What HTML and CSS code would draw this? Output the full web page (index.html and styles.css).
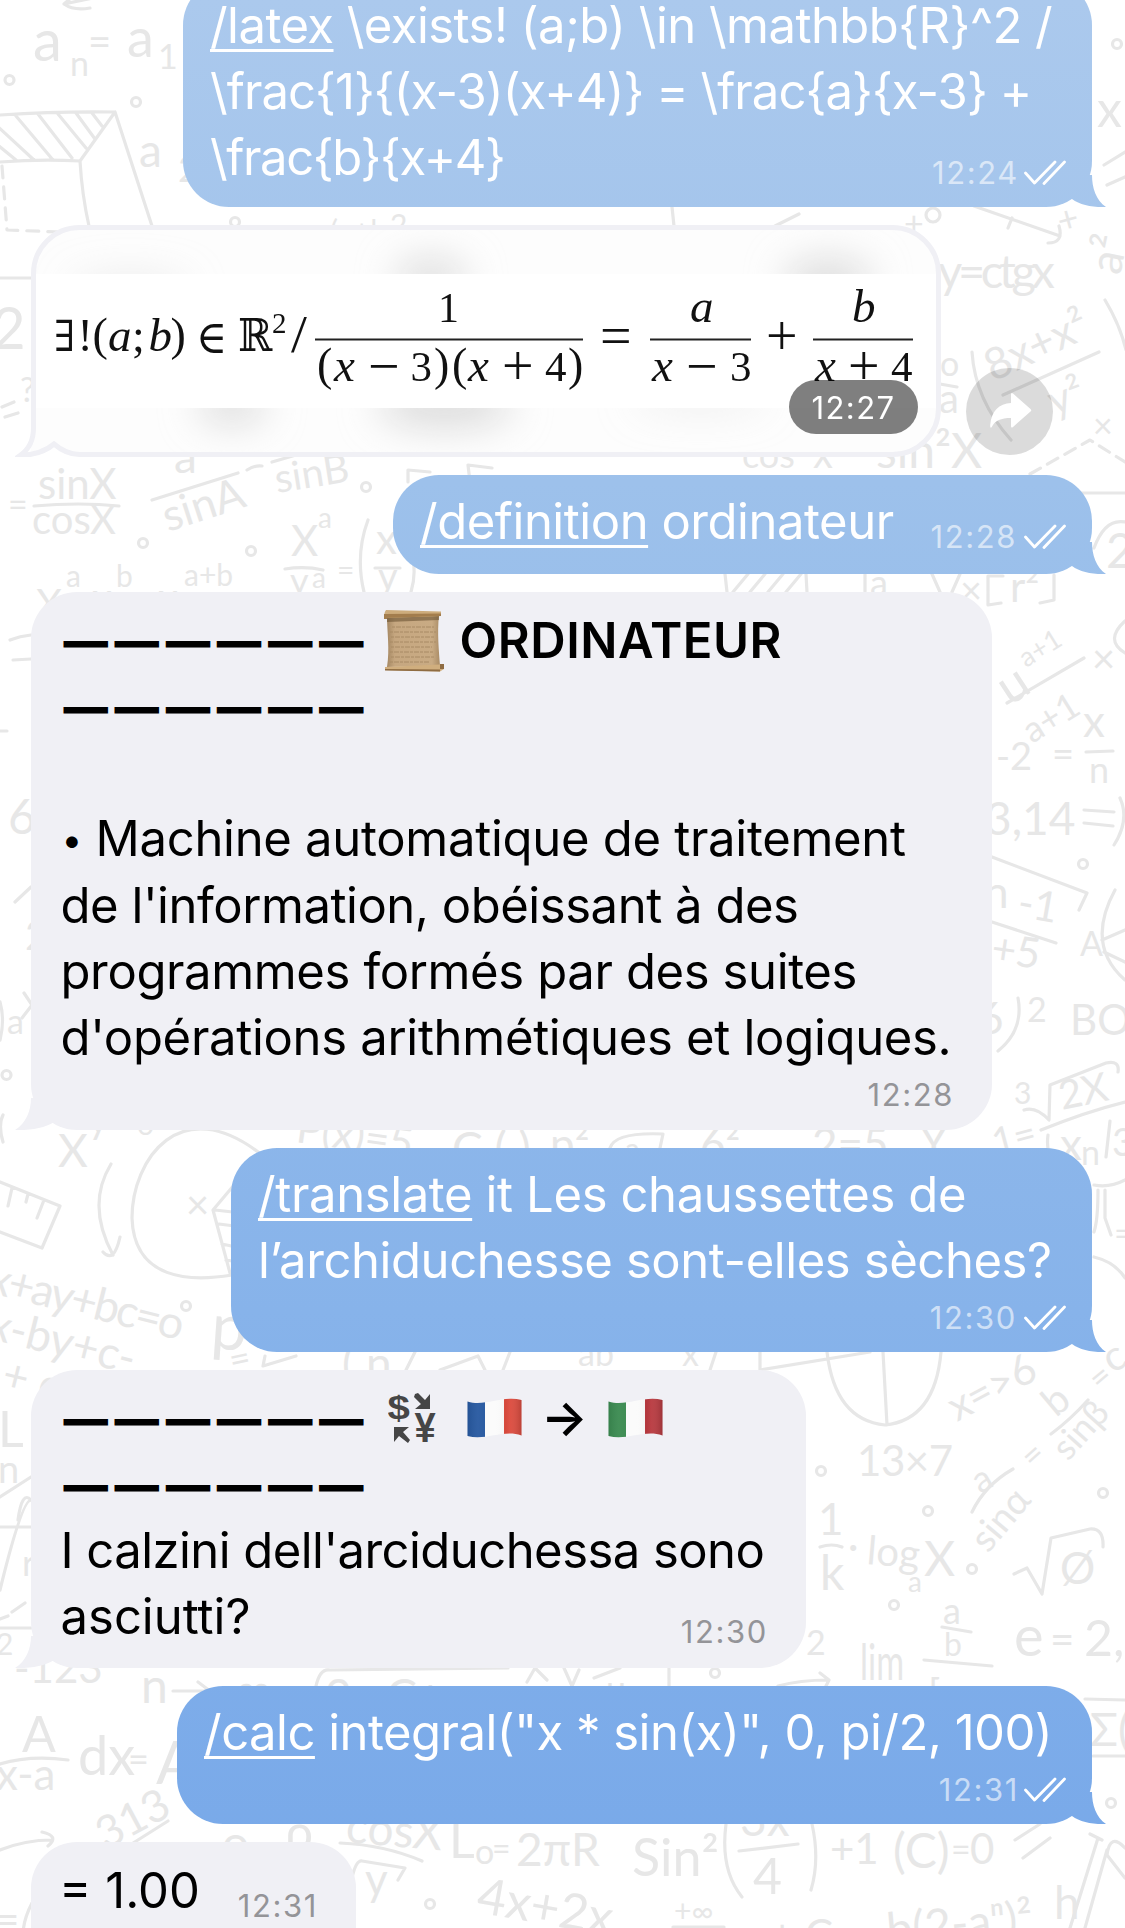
FILE: index.html
```
<!DOCTYPE html>
<html lang="fr">
<head>
<meta charset="utf-8">
<title>Chat</title>
<link rel="stylesheet" href="styles.css">
</head>
<body>
<svg class="wallpaper" width="1125" height="1928" viewBox="0 0 1125 1928" aria-hidden="true">
  <g class="doodle-lines">
    <path d="M112-6 64 4M78-8 64 4Q74 11 90 8M0 115Q60 111 115 112L80 161Q40 159 0 162M16 116 53 160M-4 125 34 160M-6 142 16 160M38 114 72 158M58 114 86 148M76 113 95 139M92 113 102 126M115 112 152 226M80 161Q82 195 89 226M0 278H31"/>
    <path d="M2 166 7 230 60 232" stroke-dasharray="12 9"/>
    <path d="M2 407 14 402M5 417 18 413M974 206 1060 236M1059 226Q1064 243 1048 243M1012 218 1008 228M972 352Q975 400 1011 440M1105 300Q1120 325 1126 350M1003 395 1099 352M940 384 957 387M1080 493H1125M1104 165 1125 152M1107 185 1125 177M672 207 674 226M775 226 799 214"/>
    <path d="M1030 474 1090 440 1125 462" stroke-dasharray="12 8"/>
    <path d="M34 506Q80 502 119 506M152 500 238 473M247 470Q255 465 262 466M272 462 296 455M285 569Q305 566 323 570M368 520Q355 555 364 592M375 568H400M413 560Q416 575 411 592M408 482V470L430 472M470 482 468 465 492 468M10 640Q20 636 31 635M13 660 31 659M0 731H7M15 902 31 887M0 1002Q5 1020 0 1040M24 993 32 1005 22 1018M3 1115Q-2 1125 3 1142"/>
    <path d="M725 574 727 592M806 574 807 592M733 592 748 574M750 592 765 574M768 592 783 574M786 592 801 574M865 574V592M932 574 940 592M960 574 952 592M1003 576H988V605L1001 603M1054 575V600L1040 603M1094 548Q1105 518 1125 522M1125 621Q1104 640 1125 653M1007 703 1084 658M1086 752 1113 751M1084 810 1114 812M1084 823 1113 826M1120 798Q1130 820 1114 845M992 857 1087 893 1079 910M992 922 1056 943M1115 890Q1085 945 1125 980M1102 940 1125 930M1104 952 1125 962M1018 998Q1024 1030 998 1051M1024 1110Q1036 1106 1049 1120L1050 1085 1106 1063Q1120 1060 1118 1072M1041 1130Q1085 1112 1125 1102M1048 1135Q1046 1150 1052 1160M1110 1121 1106 1157M1094 1185Q1110 1188 1125 1180M1098 1190Q1098 1220 1094 1232M1105 1190V1218L1111 1235M1094 1257Q1115 1262 1125 1278"/>
    <path d="M0 1182 60 1206 42 1248 0 1232M12 1188 8 1206M28 1194 26 1202M44 1200 37 1218M111 1164Q86 1205 113 1255M103 1252Q114 1264 120 1237M262 1155C180 1090 132 1160 132 1218C134 1280 190 1282 232 1275M245 1172 213 1210 230 1273M215 1210 250 1214M219 1224 250 1228M222 1244 250 1250M226 1260 250 1264M0 1497 31 1477M18 1520Q22 1490 31 1500M760 1352V1370L870 1352M827 1352Q835 1420 885 1425Q935 1420 941 1352M883 1352 887 1425M415 1352 406 1370M440 1370 478 1356 485 1370M510 1352 503 1370M716 1352 710 1370M265 1356 263 1366 296 1356M610 1148Q615 1132 663 1134L660 1148"/>
    <path d="M972 1512Q985 1485 1013 1469M1051 1434Q1070 1420 1088 1400M820 1547Q832 1543 842 1547M1014 1574 1027 1568 1042 1594 1051 1538 1090 1529Q1104 1528 1103 1547M942 1627 971 1632M924 1660 992 1666M778 1686Q800 1680 828 1680M820 1673 829 1680 824 1690M1125 1700 1085 1699M1093 1756H1125M564 1668 572 1686 579 1670M594 1678 620 1668M669 1668V1686M726 1824Q720 1870 742 1897M739 1851 798 1844M812 1824Q820 1860 811 1890M1015 1840 1040 1824M1023 1858 1050 1838M1098 1838 1070 1928M1090 1834 1102 1840M1107 1850 1085 1928M1125 1848Q1110 1832 1107 1855L1125 1878M673 1927H724M340 1843Q385 1845 422 1861M352 1878Q356 1860 362 1861L405 1868 398 1880"/>
    <path d="M0 1764Q30 1755 68 1760M130 1845 168 1821M0 1850Q25 1840 52 1840M42 1832Q60 1836 48 1846M32 1903Q18 1930 26 1950M173 1691H210M198 1682 210 1691 204 1700M0 1590Q22 1500 31 1500M0 1527H31M0 1628H31M12 1612 25 1603M0 1619 8 1616M316 1686Q320 1668 330 1670L508 1668M527 1682 535 1668 547 1680"/>
    <circle cx="9.500" cy="80" r="4.500"/><circle cx="136" cy="102" r="4.500"/><circle cx="235" cy="222" r="4.500"/><circle cx="933" cy="215" r="7"/><circle cx="1117" cy="44" r="4.500"/><circle cx="366" cy="487" r="4.500"/><circle cx="143" cy="543" r="4.500"/><circle cx="251" cy="551" r="4.500"/><circle cx="6.500" cy="1075" r="4.500"/><circle cx="1083" cy="864" r="4.500"/><circle cx="186" cy="1306" r="4.500"/><circle cx="821" cy="1471" r="4.500"/><circle cx="1103" cy="1493" r="4.500"/><circle cx="928" cy="1511" r="4.500"/><circle cx="972" cy="1569" r="4.500"/><circle cx="894" cy="1605" r="4.500"/><circle cx="715" cy="1673" r="4.500"/><circle cx="1111" cy="1803" r="4.500"/><circle cx="430" cy="1904" r="4.500"/>
  </g>
  <g class="doodle-text">
    <text x="33" y="61" font-size="58">a</text><text x="70" y="76" font-size="34">n</text><text x="88" y="56" font-size="40">=</text><text x="127" y="57" font-size="54">a</text><text x="158" y="69" font-size="34">1</text>
    <text x="139" y="167" font-size="46">a</text><text x="-8" y="349" font-size="58">2L</text><text x="20" y="402" font-size="34">?</text><text x="178" y="182" font-size="36">2</text>
    <text x="390" y="236" font-size="30">2</text><text x="330" y="242" font-size="30">(x+l</text>
    <text x="1061" y="234" font-size="36" transform="rotate(-15 1061 234)">+</text><text x="904" y="236" font-size="34">+</text>
    <text x="938" y="288" font-size="47" textLength="117">y=ctgx</text>
    <text font-size="46" transform="translate(1120 276) rotate(-78)">a²</text>
    <text font-size="44" transform="translate(993 382) rotate(-25)">8x+x²</text><text font-size="42" transform="translate(1054 416) rotate(-20)">y²</text>
    <text x="940" y="376" font-size="34">o</text><text x="939" y="413" font-size="40">a</text><text x="1093" y="438" font-size="34">×</text>
    <text x="876" y="468" font-size="48">sin²X</text><text x="742" y="468" font-size="36">cos</text><text x="813" y="468" font-size="40">x</text>
    <text x="1097" y="127" font-size="50">x</text>
    <text x="38" y="499" font-size="42">sinX</text><text x="8" y="517" font-size="34">=</text><text x="32" y="534" font-size="40">cosX</text>
    <text x="174" y="473" font-size="46">a</text><text font-size="44" transform="translate(168 532) rotate(-18)">sinA</text><text font-size="40" transform="translate(277 493) rotate(-9)">sinB</text>
    <text x="291" y="556" font-size="42">X</text><text x="318" y="528" font-size="28">a</text><text x="290" y="594" font-size="36">y</text><text x="312" y="588" font-size="28">a</text><text x="337" y="581" font-size="30">=</text><text x="376" y="554" font-size="42">x</text><text x="378" y="590" font-size="38">y</text>
    <text x="36" y="618" font-size="40">X</text><text x="66" y="587" font-size="30">a</text><text x="92" y="612" font-size="40">x</text><text x="116" y="587" font-size="30">b</text><text x="158" y="612" font-size="40">x</text><text x="184" y="586" font-size="30">a+b</text>
    <text x="8" y="834" font-size="48">6</text><text x="7" y="1034" font-size="34">a</text><text x="25" y="950" font-size="40">2</text>
    <text x="870" y="596" font-size="36">a</text><text x="960" y="604" font-size="38">×</text><text x="1010" y="602" font-size="42">r²</text><text x="1106" y="568" font-size="48">2</text>
    <text font-size="27" transform="translate(1026 668) rotate(-32)">a+1</text><text font-size="50" transform="translate(1010 706) rotate(-33)">u</text><text font-size="36" transform="translate(1032 744) rotate(-32)">a+1</text><text x="1092" y="673" font-size="40">×</text>
    <text x="996" y="770" font-size="38">-2</text><text x="1052" y="768" font-size="38">=</text><text x="1083" y="737" font-size="44">x</text><text x="1089" y="783" font-size="36">n</text>
    <text x="985" y="835" font-size="46">3,14</text>
    <text x="984" y="908" font-size="44">n</text><text font-size="42" transform="translate(1016 916) rotate(10)">-1</text><text font-size="42" transform="translate(990 962) rotate(8)">+5</text><text x="1080" y="956" font-size="34">A</text>
    <text x="978" y="1034" font-size="44">6</text><text x="1027" y="1022" font-size="34">2</text><text x="1070" y="1035" font-size="42">BO·</text>
    <text x="1014" y="1104" font-size="30">3</text><text font-size="40" transform="translate(1062 1110) rotate(-12)">2X</text><text font-size="38" transform="translate(996 1156) rotate(-15)">1=</text><text x="1060" y="1160" font-size="44">x</text><text x="1081" y="1165" font-size="34">n</text><text x="1112" y="1156" font-size="38">3</text><text x="1114" y="1246" font-size="34">=</text>
    <text x="550" y="1160" font-size="44">p²</text><text x="625" y="1160" font-size="30">a</text><text x="700" y="1160" font-size="44">6²</text><text x="812" y="1160" font-size="44">2=5</text><text x="920" y="1158" font-size="44">Y</text>
    <text font-size="42" transform="translate(295 1142) rotate(8)">P(x)=5</text><text x="452" y="1165" font-size="46">C ( )</text><text x="88" y="1133" font-size="40">y</text><text x="137" y="1135" font-size="30">o</text>
    <text x="58" y="1167" font-size="46">X</text><text x="186" y="1219" font-size="40">×</text>
    <text font-size="45" transform="translate(-14 1292) rotate(14)" textLength="200">x+ay+bc=o</text><text font-size="45" transform="translate(-14 1338) rotate(14)" textLength="150">x-by+c-</text><text font-size="44" transform="translate(0 1388) rotate(14)">+ c</text>
    <text x="210" y="1348" font-size="64" transform="rotate(4 208 1348)">p</text><text x="232" y="1373" font-size="36" transform="rotate(-12 232 1373)">=</text><text x="342" y="1380" font-size="46">( n</text><text x="578" y="1366" font-size="34">ab</text><text x="682" y="1366" font-size="34">x</text>
    <text x="-2" y="1447" font-size="50">L</text><text x="-2" y="1483" font-size="38">n</text><text x="22" y="1576" font-size="36">r</text><text x="-4" y="1655" font-size="30">2</text><text x="14" y="1683" font-size="42">-123</text>
    <text font-size="42" transform="translate(957 1422) rotate(-28)">x=&gt;6</text>
    <text font-size="40" transform="translate(1056 1418) rotate(-40)">b</text><text font-size="34" transform="translate(1100 1392) rotate(-40)">=</text><text font-size="42" transform="translate(1112 1374) rotate(-30)">c</text>
    <text x="857" y="1476" font-size="42" textLength="96">13×7</text>
    <text font-size="36" transform="translate(980 1494) rotate(-30)">a</text><text font-size="38" transform="translate(988 1554) rotate(-50)">sinα</text><text font-size="34" transform="translate(1033 1470) rotate(-42)">=</text><text font-size="36" transform="translate(1068 1462) rotate(-48)">sinβ</text>
    <text x="818" y="1535" font-size="44">1</text><text x="820" y="1590" font-size="48">k</text><text x="848" y="1560" font-size="40">·</text><text x="866" y="1564" font-size="40" transform="rotate(5 866 1564)">log</text><text x="908" y="1592" font-size="28">a</text><text x="924" y="1576" font-size="48">X</text>
    <text x="1060" y="1584" font-size="44">Ø</text><text x="860" y="1680" font-size="50" textLength="44" lengthAdjust="spacingAndGlyphs">lim</text><text x="943" y="1624" font-size="36">a</text><text x="944" y="1656" font-size="32">b</text><text x="928" y="1708" font-size="40">[ x</text>
    <text x="1014" y="1656" font-size="56">e</text><text x="1050" y="1654" font-size="42">=</text><text x="1084" y="1656" font-size="50">2,</text><text x="806" y="1655" font-size="34">2</text><text x="606" y="1702" font-size="36">u</text><text x="1090" y="1746" font-size="46">Σ(</text>
    <text x="345" y="1842" font-size="46" transform="rotate(5 345 1842)">cosX</text><text x="449" y="1858" font-size="50">L</text><text x="475" y="1864" font-size="34">o</text><text x="492" y="1860" font-size="32">=</text><text x="516" y="1866" font-size="46">2πR</text>
    <text x="632" y="1876" font-size="52">Sin²</text><text x="740" y="1836" font-size="46">3x</text><text x="753" y="1894" font-size="50">4</text><text x="830" y="1864" font-size="42">+1</text><text x="893" y="1868" font-size="48">(C)</text><text x="951" y="1862" font-size="34">=</text><text x="970" y="1864" font-size="42">0</text>
    <text x="365" y="1895" font-size="44">y</text><text font-size="50" transform="translate(475 1912) rotate(10)">4x+2x</text><text x="674" y="1922" font-size="30">+∞</text><text x="770" y="1950" font-size="42">+ C</text>
    <text font-size="46" transform="translate(888 1946) rotate(-5)">b(2-aⁿ)²</text><text x="1054" y="1919" font-size="46">h</text><text x="366" y="1956" font-size="46">a</text>
    <text x="22" y="1752" font-size="50">A</text><text x="-4" y="1790" font-size="44">x-a</text><text x="78" y="1775" font-size="54">dx</text><text x="128" y="1772" font-size="36">=</text><text x="156" y="1784" font-size="60">A</text>
    <text font-size="44" transform="translate(106 1850) rotate(-28)">313</text><text x="-6" y="1935" font-size="44">=</text><text x="141" y="1703" font-size="48">n</text><text x="236" y="1706" font-size="48">∞</text><text x="285" y="1850" font-size="50">ρ</text><text x="325" y="1712" font-size="46">2x   C+x</text><text x="222" y="1860" font-size="48">o</text>
  </g>
</svg>

<main class="chat">
  <section class="msg out first w1">
    <p style="letter-spacing:-.55px"><a class="cmd">/latex</a> \exists! (a;b) \in \mathbb{R}^2 /</p>
    <p style="letter-spacing:-.95px">\frac{1}{(x-3)(x+4)} = \frac{a}{x-3} +</p>
    <p style="letter-spacing:-1.38px">\frac{b}{x+4}</p>
    <div class="meta inline tight"><time>12:24</time><svg class="ticks" viewBox="0 0 42 25"><path d="M1.500 13L10.500 23L31 2"/><path d="M20 23.500L40.500 2"/></svg></div>
    <i class="tail"></i>
  </section>

  <section class="photo">
    <svg width="926" height="232" viewBox="15 225 926 232">
      <defs>
        <filter id="soft" x="-50%" y="-50%" width="200%" height="200%"><feGaussianBlur stdDeviation="19"/></filter>
        <clipPath id="bands"><path d="M31 227H941V274H31ZM31 408H941V455H31Z"/></clipPath>
        <clipPath id="card"><path id="shape" d="M79.500 227.500H892.500A46 46 0 0 1 938.500 273.500V408.500A46 46 0 0 1 892.500 454.500H79.500C69 454.500 61 450 54 444C46 451 34 455 20 455.500C28 450 33.500 441 33.500 428V273.500A46 46 0 0 1 79.500 227.500Z"/></clipPath>
      </defs>
      <use href="#shape" fill="#fff"/>
      <g clip-path="url(#card)"><g clip-path="url(#bands)">
        <path fill="#fdfdfd" d="M31 227H941V455H31Z"/>
        <g filter="url(#soft)" fill="#dadada">
          <ellipse cx="431" cy="278" rx="36" ry="18"/><ellipse cx="828" cy="280" rx="44" ry="20"/><ellipse cx="130" cy="290" rx="60" ry="14" opacity=".5"/>
          <ellipse cx="232" cy="405" rx="34" ry="18"/><ellipse cx="445" cy="405" rx="68" ry="22"/><ellipse cx="700" cy="400" rx="70" ry="12" opacity=".4"/>
        </g>
      </g></g>
      <use href="#shape" fill="none" stroke="#f0f0f5" stroke-width="5"/>
      <g class="math">
        <text transform="translate(54 351) scale(.9 1)" class="sym">∃</text><text x="77.500" y="351" font-size="46">!</text><text x="92.500" y="350" class="par">(</text><text x="108" y="351" class="var">a</text><text x="132" y="351" font-size="46">;</text><text x="148.500" y="351" class="var">b</text><text x="170.500" y="350" class="par">)</text>
        <text transform="translate(196 353) scale(.98 1.08)" class="sym">∈</text><text transform="translate(238 351) scale(.96 1.05)" class="sym">ℝ</text><text x="272" y="333" font-size="29">2</text><text transform="translate(291 352) scale(1.3 1.2)" font-size="44">/</text>
        <text x="438" y="322" font-size="42">1</text>
        <text x="317" y="380" class="par">(</text><text x="334" y="380.500" class="var">x</text><text x="368" y="385" class="op">−</text><text x="410.500" y="380.500" class="num">3</text><text x="434" y="380" class="par">)</text><text x="452" y="380" class="par">(</text><text x="468" y="380.500" class="var">x</text><text x="502" y="385" class="op">+</text><text x="545" y="380.500" class="num">4</text><text x="568" y="380" class="par">)</text>
        <text x="600" y="355" class="op">=</text>
        <text x="690" y="322" class="var">a</text><text x="652" y="380.500" class="var">x</text><text x="686" y="385" class="op">−</text><text x="730" y="380.500" class="num">3</text>
        <text x="766" y="355" class="op">+</text>
        <text x="852" y="322" class="var">b</text><text x="815" y="380.500" class="var">x</text><text x="848" y="385" class="op">+</text><text x="891" y="380.500" class="num">4</text>
        <path d="M315 339.500H583M650 339.500H751M813 339.500H913" stroke="#222" stroke-width="2.200"/>
      </g>
    </svg>
    <time class="badge">12:27</time>
    <button class="share" aria-label="Share"><svg width="87" height="87" viewBox="0 0 87 87"><path fill="#fff" d="M45 26.500Q45 24 47 25.500L64.500 41Q66 42.300 64.500 43.600L47 59Q45 60.500 45 58V50C35 50 29 52.500 25.800 59Q24 61 24.200 57C25.500 43 33 35.500 45 35Z"/></svg></button>
  </section>

  <section class="msg out single w2">
    <p style="letter-spacing:-.47px"><a class="cmd">/definition</a> ordinateur</p>
    <div class="meta inline"><time>12:28</time><svg class="ticks" viewBox="0 0 42 25"><path d="M1.500 13L10.500 23L31 2"/><path d="M20 23.500L40.500 2"/></svg></div>
    <i class="tail"></i>
  </section>

  <section class="msg in w3">
    <p class="row"><b class="rule">——————</b>
      <svg class="scroll" width="60" height="63" viewBox="0 0 60 63"><defs><linearGradient id="paper" x2="1"><stop offset="0" stop-color="#a58863"/><stop offset=".15" stop-color="#c6a780"/><stop offset=".85" stop-color="#c9ab84"/><stop offset="1" stop-color="#a98b65"/></linearGradient></defs><path fill="url(#paper)" d="M3 6H55C53 24 55 42 56 57L3 58C6 40 3 24 3 6Z"/><path fill="#6b5334" opacity=".6" d="M3 8 55 7V11L3 13Z"/><path stroke="#a88a64" stroke-width="1" stroke-dasharray="3 1 5 1" d="M8 18H50M6 23H52M7 28H50M6 33H52M7 38H48M6 43H50M7 48H51M6 53H46"/><path fill="#cdac7c" d="M2 1 57 2.500V7L1 9Q-1 5 2 1Z"/><path fill="#a37d4d" d="M1 5 57 4.500V7L1 9ZM0 5H3V10H0Z"/><path fill="#d0ae7e" d="M1 58 56 55.500 60 57V60L56 62.500 1 61Z"/><path fill="#8f6c42" d="M1 60 56 60.500V62.500L1 61.500ZM56 55H60V60H56Z"/></svg>
      <b class="title">ORDINATEUR</b></p>
    <p class="row"><b class="rule">——————</b></p>
    <p>&nbsp;</p>
    <p style="letter-spacing:-.29px"><span class="bullet">•</span> Machine automatique de traitement</p>
    <p style="letter-spacing:-.46px">de l'information, obéissant à des</p>
    <p style="letter-spacing:-.38px">programmes formés par des suites</p>
    <p style="letter-spacing:-.31px">d'opérations arithmétiques et logiques.</p>
    <div class="meta"><time>12:28</time></div>
    <i class="tail"></i>
  </section>

  <section class="msg out w4">
    <p style="letter-spacing:-.38px"><a class="cmd">/translate</a> it Les chaussettes de</p>
    <p style="letter-spacing:-.41px">l’archiduchesse sont-elles sèches?</p>
    <div class="meta"><time>12:30</time><svg class="ticks" viewBox="0 0 42 25"><path d="M1.500 13L10.500 23L31 2"/><path d="M20 23.500L40.500 2"/></svg></div>
    <i class="tail"></i>
  </section>

  <section class="msg in w5">
    <p class="row"><b class="rule">——————</b>
      <svg class="currency" width="50" height="50" viewBox="0 0 50 50"><g fill="#464646"><text transform="translate(-.500 26) scale(1.180 1)" font-size="34">$</text><text transform="translate(26.500 49) scale(1.120 1.250)" font-size="34">¥</text><path d="M27 1 30 0 37 7 42 1V16H27L33 11 26 4ZM6 34H21L15 39 22 47 20 50 11 43 6 49Z"/></g></svg>
      <svg class="flag" width="55" height="40" viewBox="0 0 55 40"><defs><linearGradient id="wave" x2="1"><stop offset="0" stop-color="#000" stop-opacity=".08"/><stop offset=".2" stop-color="#fff" stop-opacity=".05"/><stop offset=".5" stop-color="#fff" stop-opacity="0"/><stop offset=".7" stop-color="#000" stop-opacity=".03"/><stop offset=".78" stop-color="#fff" stop-opacity=".04"/><stop offset="1" stop-color="#000" stop-opacity=".16"/></linearGradient><clipPath id="cloth"><path d="M.500 3.500C18 9 36-3 54.500 2V37.500C37 31 19 43 .500 38Z"/></clipPath></defs><g clip-path="url(#cloth)"><path fill="#2658a0" d="M0 0H18V40H0Z"/><path fill="#fbfbfb" d="M18 0H37V40H18Z"/><path fill="#dc4b3e" d="M37 0H55V40H37Z"/><path fill="url(#wave)" d="M0 0H55V40H0Z"/></g></svg>
      <b class="arrow">→</b>
      <svg class="flag" width="55" height="40" viewBox="0 0 55 40"><g clip-path="url(#cloth)"><path fill="#3a8a50" d="M0 0H18V40H0Z"/><path fill="#fbfbfb" d="M18 0H37V40H18Z"/><path fill="#b93a40" d="M37 0H55V40H37Z"/><path fill="url(#wave)" d="M0 0H55V40H0Z"/></g></svg></p>
    <p class="row"><b class="rule">——————</b></p>
    <p style="letter-spacing:-.55px">I calzini dell'arciduchessa sono</p>
    <p>asciutti?</p>
    <div class="meta inline"><time>12:30</time></div>
    <i class="tail"></i>
  </section>

  <section class="msg out w6">
    <p style="letter-spacing:-.52px"><a class="cmd">/calc</a> integral("x * sin(x)", 0, pi/2, 100)</p>
    <div class="meta tight"><time>12:31</time><svg class="ticks" viewBox="0 0 42 25"><path d="M1.500 13L10.500 23L31 2"/><path d="M20 23.500L40.500 2"/></svg></div>
    <i class="tail"></i>
  </section>

  <section class="msg in w7">
    <p>= 1.00</p>
    <div class="meta inline"><time>12:31</time></div>
    <i class="tail"></i>
  </section>
</main>
</body>
</html>
```
FILE: styles.css
```
* { box-sizing: border-box; }

html, body { margin: 0; height: 1928px; overflow: hidden; background: #fff; }

body { position: relative; font-family: Inter, "Liberation Sans", sans-serif; }

p { margin: 0; }

.wallpaper { position: absolute; inset: 0; }
.doodle-lines { fill: none; stroke: #e7e7e7; stroke-width: 3.2; stroke-linecap: round; stroke-linejoin: round; }
.doodle-text { fill: #e7e7e7; font-family: Lato, "DejaVu Sans", sans-serif; }

.chat {
  position: relative;
  display: flex;
  flex-direction: column;
  gap: 18px;
  height: 1928px;
  padding: 0 33px 0 31px;
  overflow: hidden;
}

.msg {
  position: relative;
  display: flex;
  flex: none;
  flex-direction: column;
  border-radius: 46px;
  font-size: 49px;
  line-height: 66px;
  white-space: nowrap;
}

.out {
  align-self: flex-end;
  padding: 14px 26px 20px 27px;
  color: #fff;
}

.out, .out .tail {
  background: linear-gradient(#abc9ed, #9dc1eb 25%, #87b3ea 68%, #77a8e9) fixed;
}

.in {
  align-self: flex-start;
  padding: 16px 38px 22px 29.5px;
  color: #000;
  background: #f0f0f5;
}

.first { margin-top: -21px; }

.w1 { width: 909px; height: 228px; }
.w2 { width: 699px; height: 99px; }
.w3 { width: 961px; height: 538px; }
.w4 { width: 861px; height: 204px; }
.w5 { width: 775px; height: 298px; }
.w6 { width: 915px; height: 138px; }
.w7 { width: 325px; height: 130px; padding-left: 28px; }

.cmd {
  text-decoration: underline;
  text-decoration-thickness: 3px;
  text-underline-offset: 6px;
}

.meta {
  display: flex;
  align-self: flex-end;
  gap: 7px;
  height: 26px;
  margin-top: 11px;
  font-size: 31px;
  line-height: 26px;
  letter-spacing: 1.6px;
}
.meta.tight { gap: 5px; }
.meta.inline { margin-top: -31px; }
.in time { color: #949498; }
.out time { color: rgba(255, 255, 255, .6); }

.ticks {
  flex: none;
  width: 42px;
  height: 25px;
  fill: none;
  stroke: #fff;
  stroke-width: 2.8;
  stroke-linecap: round;
  stroke-linejoin: round;
}

.tail { position: absolute; bottom: 0; width: 60px; height: 32px; }
.out .tail {
  right: -14px;
  z-index: -1;
  clip-path: path("M0 0H46C46 13 50 25 60 32C46 32.500 34 30 26 24L0 10Z");
}
.msg { z-index: 0; }
.in .tail {
  left: -16px;
  background: #f0f0f5;
  clip-path: path("M60 0H16C16 13 11 25 0 32C16 32.500 30 30 39 24L60 10Z");
}

.row { display: flex; align-items: center; height: 66px; }
.rule { margin-left: 3px; font-size: 44.5px; font-weight: 900; letter-spacing: 6.6px; }
.title { margin-left: 16px; font-weight: 600; letter-spacing: .53px; }
.scroll { margin: -2px 0 0 13.5px; }
.bullet { margin-left: 1px; font-size: 37px; vertical-align: 3px; }
.currency { margin: -2px 0 0 18px; font: 700 33px "Liberation Sans", Arial, sans-serif; }
.flag { margin: -2px 0 0 29px; }
.arrow { margin: -3px 0 0 19px; font-weight: 600; }
.arrow + .flag { margin-left: 20px; }

.photo { position: relative; flex: none; height: 232px; }
.photo > svg { display: block; margin-left: -16px; }

.badge {
  position: absolute;
  left: 758px;
  top: 155px;
  width: 129px;
  height: 54px;
  border-radius: 27px;
  background: rgba(0, 0, 0, .5);
  color: #fff;
  font-size: 31px;
  line-height: 55px;
  letter-spacing: 1.4px;
  text-align: center;
}

.share {
  position: absolute;
  left: 935px;
  top: 143px;
  width: 87px;
  height: 87px;
  padding: 0;
  border: 0;
  border-radius: 50%;
  background: rgba(0, 0, 0, .14);
}
.share svg { display: block; }

.math { font-family: "Liberation Serif", "DejaVu Serif", serif; fill: #111; }
.math .var { font-size: 47px; font-style: italic; }
.math .num { font-size: 43px; }
.math .par { font-size: 46px; }
.math .op { font-size: 56px; }
.math .sym { font-size: 43px; }
```
